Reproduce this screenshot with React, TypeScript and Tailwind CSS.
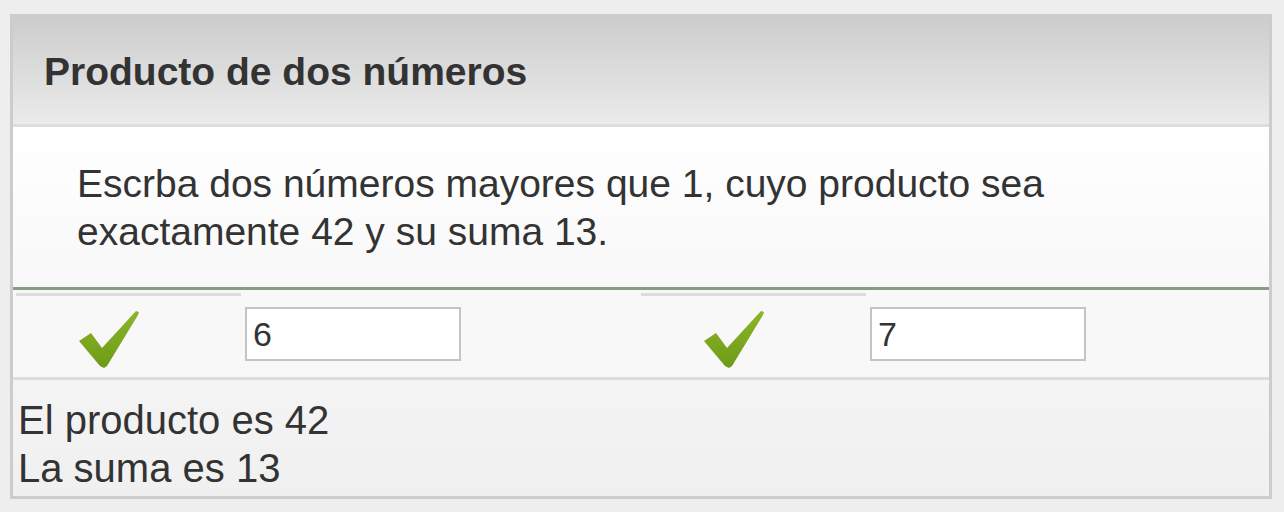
import React from 'react';

function Check() {
  return (
    <svg width="60" height="57" viewBox="0 0 60 57" className="block">
      <defs>
        <linearGradient id="chk" x1="0" y1="0" x2="0" y2="1">
          <stop offset="0" stopColor="#8cb52a" />
          <stop offset="1" stopColor="#6f9a16" />
        </linearGradient>
      </defs>
      <polygon
        points="0,30 9,24 12,22 23,37 57,0 60,1 59,4 28,55 25,57 21,55"
        fill="url(#chk)"
      />
    </svg>
  );
}

function Answer({ value }: { value: string }) {
  return (
    <div className="w-[625px] h-full flex items-start">
      <div className="w-[225px] h-full border-t-[3px] border-[#dddddd] pl-[63px] pt-[15px]">
        <Check />
      </div>
      <input
        readOnly
        value={value}
        className="ml-[4px] mt-[14px] w-[216px] h-[54px] border-2 border-[#c4c4c4] bg-white px-[6px] text-[34px] text-[#333333] outline-none"
      />
    </div>
  );
}

export default function App() {
  return (
    <div className="min-h-screen bg-[#eeeeee] pt-[14px] pl-[10px] pr-[12px] font-['Liberation_Sans',Arial,sans-serif] text-[#333333]">
      <div className="border-[3px] border-t-0 border-[#cccccc]">
        {/* Header */}
        <div className="h-[113px] border-b-[3px] border-[#dddddd] bg-gradient-to-b from-[#cccccc] to-[#ebebeb] pl-[31px] pt-[34px]">
          <h1 className="text-[39px] font-bold leading-[48px]">Producto de dos números</h1>
        </div>

        {/* Enunciado */}
        <div className="h-[163px] border-b-[3px] border-[#859e82] bg-gradient-to-b from-white to-[#f8f8f8] pl-[64px] pt-[33px]">
          <p className="text-[39px] leading-[48px]">
            Escrba dos números mayores que 1, cuyo producto sea
            <br />
            exactamente 42 y su suma 13.
          </p>
        </div>

        {/* Respuestas */}
        <div className="h-[90px] border-b-[3px] border-[#dddddd] bg-[#f8f8f8] pt-[3px] pl-[3px] flex">
          <Answer value="6" />
          <Answer value="7" />
        </div>

        {/* Resultado */}
        <div className="h-[116px] bg-gradient-to-b from-[#f4f4f4] to-[#f0f0f0] pl-[5px] pt-[16px] text-[40px] leading-[48px]">
          <div>El producto es 42</div>
          <div>La suma es 13</div>
        </div>
      </div>
    </div>
  );
}
